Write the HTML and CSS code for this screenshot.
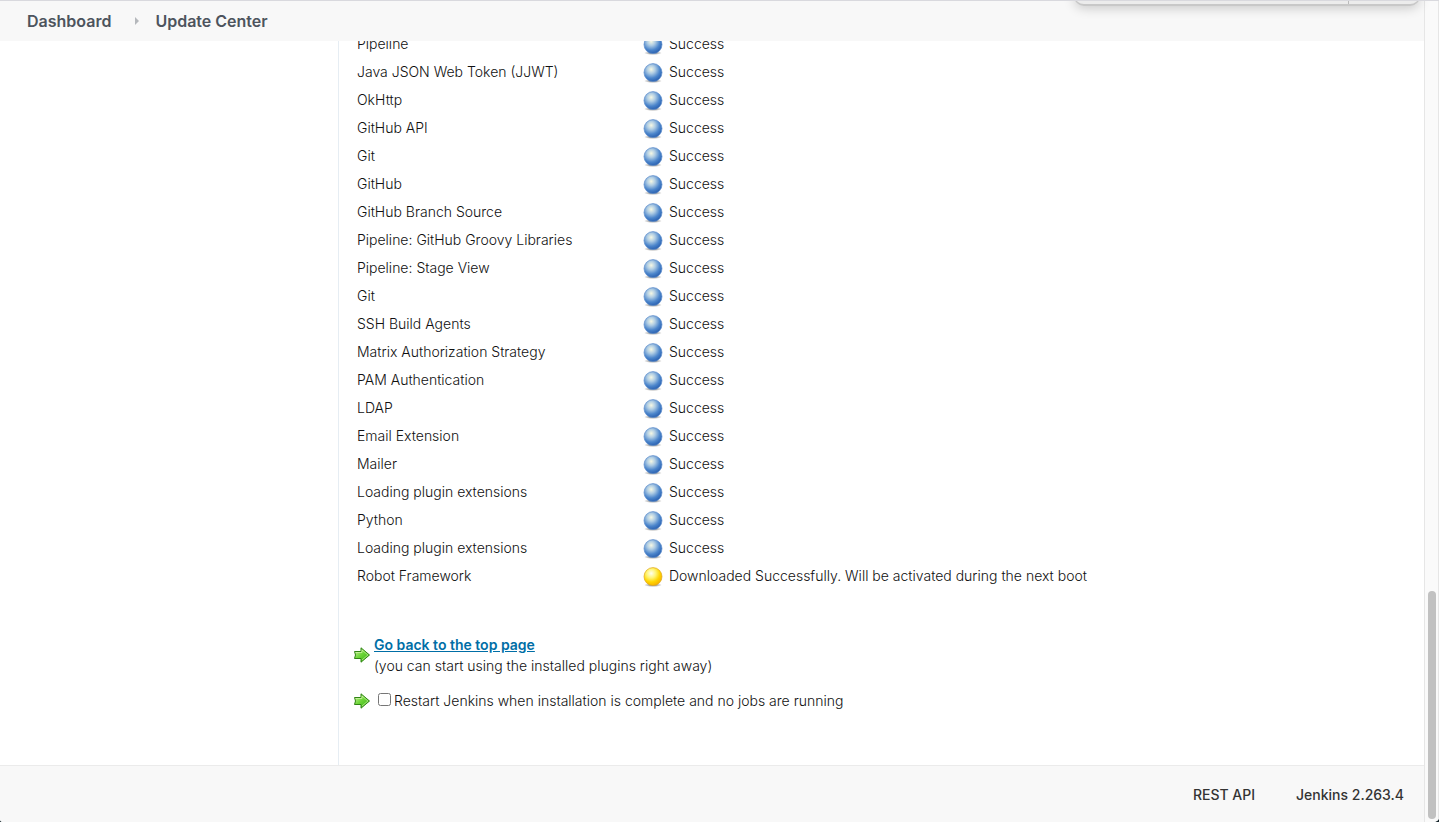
FILE: index.html
```
<!DOCTYPE html>
<html lang="en">
<head>
<meta charset="utf-8">
<title>Update Center [Jenkins]</title>
<link rel="stylesheet" href="styles.css">
</head>
<body>
<svg class="defs" aria-hidden="true">
  <defs>
    <radialGradient id="blue-fill" cx=".4" cy=".32" r=".74">
      <stop offset="0" stop-color="#f6f8e4"/><stop offset=".3" stop-color="#b0cde4"/><stop offset=".65" stop-color="#4c86cc"/><stop offset="1" stop-color="#2257a8"/>
    </radialGradient>
    <radialGradient id="yellow-fill" cx=".4" cy=".32" r=".74">
      <stop offset="0" stop-color="#fffff0"/><stop offset=".35" stop-color="#fff472"/><stop offset=".65" stop-color="#ffd500"/><stop offset="1" stop-color="#f5a800"/>
    </radialGradient>
    <radialGradient id="shade">
      <stop offset=".4" stop-color="#000" stop-opacity=".35"/><stop offset="1" stop-color="#000" stop-opacity="0"/>
    </radialGradient>
    <linearGradient id="arrow-fill" x1="0" y1="0" x2="1" y2="1">
      <stop offset="0" stop-color="#d9f5ae"/><stop offset=".45" stop-color="#6fd63a"/><stop offset="1" stop-color="#2fb00c"/>
    </linearGradient>
    <symbol id="blue" viewBox="0 0 20 20"><ellipse cx="10" cy="18" rx="9" ry="2" fill="url(#shade)"/><circle cx="10" cy="9.6" r="9" fill="url(#blue-fill)" stroke="#5c8ccb" stroke-width=".7"/></symbol>
    <symbol id="yellow" viewBox="0 0 20 20"><ellipse cx="10" cy="18" rx="9" ry="2" fill="url(#shade)"/><circle cx="10" cy="9.6" r="9" fill="url(#yellow-fill)" stroke="#dda51b" stroke-width=".7"/></symbol>
    <symbol id="arrow" viewBox="0 0 16 16"><path d="M.5 4.5H7V.8L15.5 8 7 15.2V11.5H.5L1.5 8Z" fill="url(#arrow-fill)" stroke="#2f8413"/><path d="M1.6 5.5H8V3L13.9 8 8 13" fill="none" stroke="#e0f8b8" stroke-opacity=".6"/></symbol>
  </defs>
</svg>
<div class="window">
  <div class="page">
    <header class="breadcrumbs">
      <nav class="crumbs" aria-label="Breadcrumb">
        <a href="#">Dashboard</a>
        <svg class="chevron" viewBox="0 0 4 8" aria-hidden="true"><path d="M0 0 4 4 0 8Z"/></svg>
        <a href="#">Update Center</a>
      </nav>
    </header>
    <div class="body">
      <aside class="side"></aside>
      <main class="main">
        <table class="jobs">
          <tbody>
            <tr><td class="name">Pipeline</td><td><span class="status"><svg class="orb"><use href="#blue"/></svg>Success</span></td></tr>
            <tr><td class="name">Java JSON Web Token (JJWT)</td><td><span class="status"><svg class="orb"><use href="#blue"/></svg>Success</span></td></tr>
            <tr><td class="name">OkHttp</td><td><span class="status"><svg class="orb"><use href="#blue"/></svg>Success</span></td></tr>
            <tr><td class="name">GitHub API</td><td><span class="status"><svg class="orb"><use href="#blue"/></svg>Success</span></td></tr>
            <tr><td class="name">Git</td><td><span class="status"><svg class="orb"><use href="#blue"/></svg>Success</span></td></tr>
            <tr><td class="name">GitHub</td><td><span class="status"><svg class="orb"><use href="#blue"/></svg>Success</span></td></tr>
            <tr><td class="name">GitHub Branch Source</td><td><span class="status"><svg class="orb"><use href="#blue"/></svg>Success</span></td></tr>
            <tr><td class="name">Pipeline: GitHub Groovy Libraries</td><td><span class="status"><svg class="orb"><use href="#blue"/></svg>Success</span></td></tr>
            <tr><td class="name">Pipeline: Stage View</td><td><span class="status"><svg class="orb"><use href="#blue"/></svg>Success</span></td></tr>
            <tr><td class="name">Git</td><td><span class="status"><svg class="orb"><use href="#blue"/></svg>Success</span></td></tr>
            <tr><td class="name">SSH Build Agents</td><td><span class="status"><svg class="orb"><use href="#blue"/></svg>Success</span></td></tr>
            <tr><td class="name">Matrix Authorization Strategy</td><td><span class="status"><svg class="orb"><use href="#blue"/></svg>Success</span></td></tr>
            <tr><td class="name">PAM Authentication</td><td><span class="status"><svg class="orb"><use href="#blue"/></svg>Success</span></td></tr>
            <tr><td class="name">LDAP</td><td><span class="status"><svg class="orb"><use href="#blue"/></svg>Success</span></td></tr>
            <tr><td class="name">Email Extension</td><td><span class="status"><svg class="orb"><use href="#blue"/></svg>Success</span></td></tr>
            <tr><td class="name">Mailer</td><td><span class="status"><svg class="orb"><use href="#blue"/></svg>Success</span></td></tr>
            <tr><td class="name">Loading plugin extensions</td><td><span class="status"><svg class="orb"><use href="#blue"/></svg>Success</span></td></tr>
            <tr><td class="name">Python</td><td><span class="status"><svg class="orb"><use href="#blue"/></svg>Success</span></td></tr>
            <tr><td class="name">Loading plugin extensions</td><td><span class="status"><svg class="orb"><use href="#blue"/></svg>Success</span></td></tr>
            <tr><td class="name">Robot Framework</td><td><span class="status"><svg class="orb"><use href="#yellow"/></svg>Downloaded Successfully. Will be activated during the next boot</span></td></tr>
          </tbody>
        </table>
        <div class="actions">
          <div class="action">
            <svg class="arrow" aria-hidden="true"><use href="#arrow"/></svg>
            <div><a class="back" href="#">Go back to the top page</a><br>(you can start using the installed plugins right away)</div>
          </div>
          <div class="action">
            <svg class="arrow" aria-hidden="true"><use href="#arrow"/></svg>
            <div class="restart"><input class="tick" type="checkbox" id="restart"><label for="restart">Restart Jenkins when installation is complete and no jobs are running</label></div>
          </div>
        </div>
      </main>
    </div>
    <footer class="footer">
      <a href="#">REST API</a>
      <a href="#">Jenkins 2.263.4</a>
    </footer>
  </div>
  <div class="scrollbar" aria-hidden="true"><div class="thumb"></div></div>
  <div class="sheet" aria-hidden="true"></div>
</div>
</body>
</html>
```
FILE: styles.css
```
* { box-sizing: border-box; }
html { background: #17272c; }
body {
  margin: 0;
  color: #333;
  font: 14px/21px Inter, "Liberation Sans", sans-serif;
}
a { color: inherit; text-decoration: none; }
.defs { position: absolute; width: 0; height: 0; }
.window {
  position: relative;
  display: flex;
  height: 100vh;
  overflow: hidden;
  background: #fff;
  border-top: 1px solid #d9d9de;
  border-radius: 0 0 5px 3px;
}
.page { flex: 1; min-width: 0; display: flex; flex-direction: column; }
.breadcrumbs { flex: none; padding: 8px 27px; background: #f8f8f8; }
.crumbs {
  display: flex;
  align-items: center;
  color: #4d545d;
  font-size: 16px;
  font-weight: 600;
  line-height: 24px;
}
.chevron { width: 4px; height: 8px; margin: 0 16px 0 24px; fill: #b5b8bc; }
.body { flex: 1; min-height: 0; display: flex; overflow: hidden; }
.side { flex: none; width: 339px; border-right: 1px solid #e6edf3; }
.main {
  flex: 1;
  min-width: 0;
  display: flex;
  flex-direction: column;
  justify-content: flex-end;
  padding: 0 15px 54px;
  color: #111;
  font-weight: 300;
}
.jobs { align-self: flex-start; border-collapse: collapse; }
.jobs td { height: 28px; padding: 0 3px; }
.jobs .name { min-width: 286px; width: 286px; }
.status { display: flex; align-items: center; gap: 6px; }
.orb { flex: none; width: 20px; height: 20px; margin-top: 3px; }
.actions { display: flex; flex-direction: column; gap: 14px; margin-top: 45px; }
.action { display: flex; align-items: center; gap: 4px; }
.arrow { flex: none; width: 16px; height: 16px; }
.back { color: #006ea6; font-weight: 600; text-decoration: underline; }
.restart { display: flex; align-items: center; gap: 3px; padding-left: 4px; }
.tick { width: 13px; height: 13px; margin: 0 0 3px; }
.footer {
  flex: none;
  display: flex;
  justify-content: flex-end;
  gap: 41px;
  padding: 18px 20px 17px;
  background: #f8f8f8;
  border-top: 1px solid #ebebeb;
  font-weight: 500;
}
.scrollbar {
  flex: none;
  width: 15px;
  display: flex;
  flex-direction: column;
  justify-content: flex-end;
  padding: 3px;
  background: #fafafa;
  border: solid #e6e6e6;
  border-width: 0 1px;
}
.thumb { width: 8px; height: 28%; border-radius: 4px; background: #c1c1c1; }
.sheet {
  position: absolute;
  top: -8px;
  right: 19px;
  width: 346px;
  height: 13px;
  background: linear-gradient(to right, transparent 273px, #bbb 273px 274px, transparent 274px), #ececec;
  border: solid #c8c8c8;
  border-width: 0 1px 2px;
  border-radius: 0 0 10px 10px;
  box-shadow: 0 2px 12px rgb(0 0 0 / 20%);
}
```
